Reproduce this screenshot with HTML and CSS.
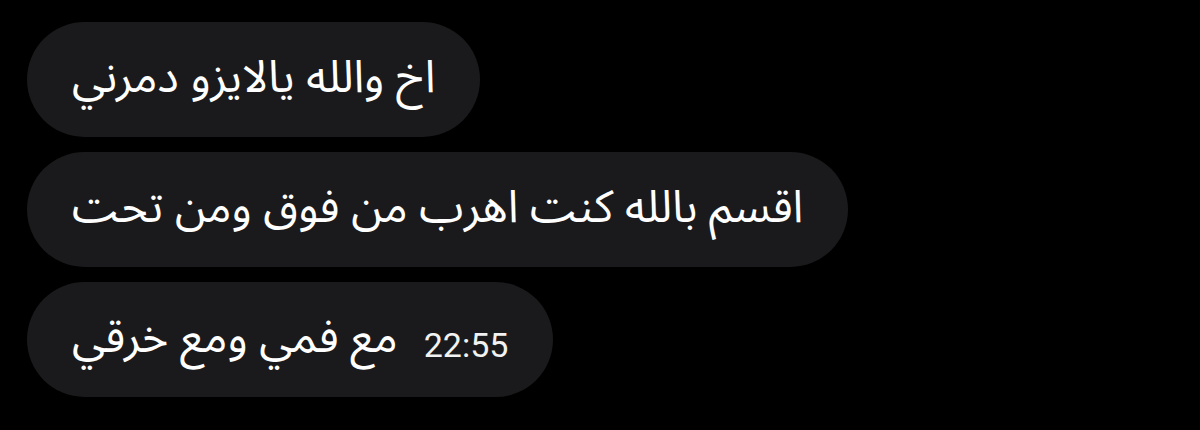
FILE: index.html
```html
<!DOCTYPE html>
<html lang="ar">
<head>
    <meta charset="UTF-8">
    <meta name="viewport" content="width=device-width, initial-scale=1.0">
    <title>رسائل</title>
    <link rel="stylesheet" href="styles.css">
</head>
<body>
    <div class="chat">
        <div class="bubble">
            <span class="text" dir="rtl">اخ والله يالايزو دمرني</span>
        </div>
        <div class="bubble">
            <span class="text" dir="rtl">اقسم بالله كنت اهرب من فوق ومن تحت</span>
        </div>
        <div class="bubble">
            <span class="text" dir="rtl">مع فمي ومع خرقي</span>
            <span class="time">22:55</span>
        </div>
    </div>
</body>
</html>
```

FILE: styles.css
```css
body {
    margin: 0;
    padding: 0;
    background-color: #000;
    color: #fff;
    font-family: "Noto Sans Arabic", "Noto Sans", "DejaVu Sans", sans-serif;
}
.chat {
    display: flex;
    flex-direction: column;
    align-items: flex-start;
    gap: 15px;
    padding: 22px 0 0 27px;
}
.bubble {
    display: flex;
    align-items: center;
    gap: 26px;
    height: 115px;
    box-sizing: border-box;
    padding: 0 45px;
    background-color: #1a1a1c;
    border-radius: 58px;
}
.text {
    font-size: 45px;
    line-height: 1;
    padding-bottom: 4px;
}
.time {
    font-family: Roboto, sans-serif;
    font-size: 34px;
    color: #f2f2f2;
    padding-top: 10px;
}
```
